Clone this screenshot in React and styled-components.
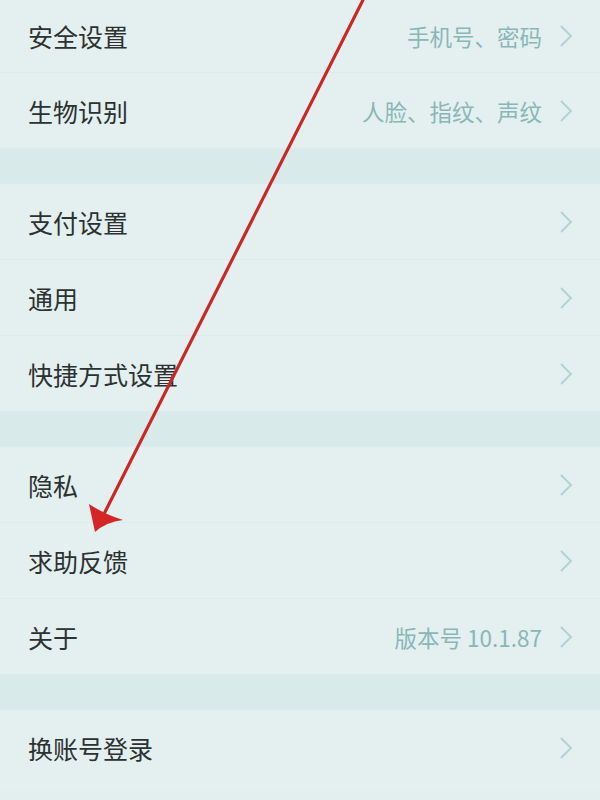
import React from "react";
import styled, { createGlobalStyle } from "styled-components";

const Global = createGlobalStyle`
  html, body { margin: 0; padding: 0; background: #e2efee; }
  body { font-family: "Noto Sans CJK SC", "Noto Sans", sans-serif; }
`;

const Page = styled.div`
  position: relative;
  width: 600px;
  height: 800px;
  overflow: hidden;
  background: #e2efee;
`;

const Group = styled.div`
  display: flex;
  flex-direction: column;
  background: #e3f0ef;
`;

const Gap = styled.div`
  height: 35px;
  background: #d9eaea;
  border-top: 1px solid #dcecec;
  border-bottom: 1px solid #dcecec;
  box-sizing: border-box;
`;

const Row = styled.div`
  display: flex;
  align-items: center;
  height: ${(p) => (p.$first ? "73px" : "76px")};
  box-sizing: border-box;
  padding: 0 27px 0 28px;
  border-bottom: ${(p) => (p.$last ? "none" : "1px solid #dbeaea")};
`;

const Label = styled.span`
  flex: 1;
  font-size: 25px;
  color: #2c3131;
`;

const Value = styled.span`
  font-size: 22.5px;
  color: #89b7b8;
  margin-right: 17px;
`;

const Chevron = styled.svg`
  width: 14px;
  height: 24px;
  flex: none;
`;

const Arrow = styled.svg`
  position: absolute;
  left: 0;
  top: 0;
  pointer-events: none;
`;

const groups = [
  [
    ["安全设置", "手机号、密码"],
    ["生物识别", "人脸、指纹、声纹"],
  ],
  [
    ["支付设置"],
    ["通用"],
    ["快捷方式设置"],
  ],
  [
    ["隐私"],
    ["求助反馈"],
    ["关于", "版本号 10.1.87"],
  ],
  [["换账号登录"]],
];

function Chev() {
  return (
    <Chevron viewBox="0 0 14 24">
      <path d="M2 2 L12 12 L2 22" fill="none" stroke="#b4d2d3" strokeWidth="2" />
    </Chevron>
  );
}

export default function App() {
  return (
    <>
      <Global />
      <Page>
        {groups.map((g, gi) => (
          <React.Fragment key={gi}>
            {gi > 0 && <Gap />}
            <Group>
              {g.map(([label, value], i) => (
                <Row
                  key={label}
                  $first={gi === 0 && i === 0}
                  $last={i === g.length - 1 && gi === groups.length - 1}
                >
                  <Label>{label}</Label>
                  {value && <Value>{value}</Value>}
                  <Chev />
                </Row>
              ))}
            </Group>
          </React.Fragment>
        ))}
        <Arrow width="600" height="800" viewBox="0 0 600 800">
          <line x1="364" y1="-2" x2="105" y2="512" stroke="#c92828" strokeWidth="3.2" strokeLinecap="round" />
          <path d="M95 532 L89 504 Q104 514 123 520 Q106 522 95 532 Z" fill="#d42626" />
        </Arrow>
      </Page>
    </>
  );
}
